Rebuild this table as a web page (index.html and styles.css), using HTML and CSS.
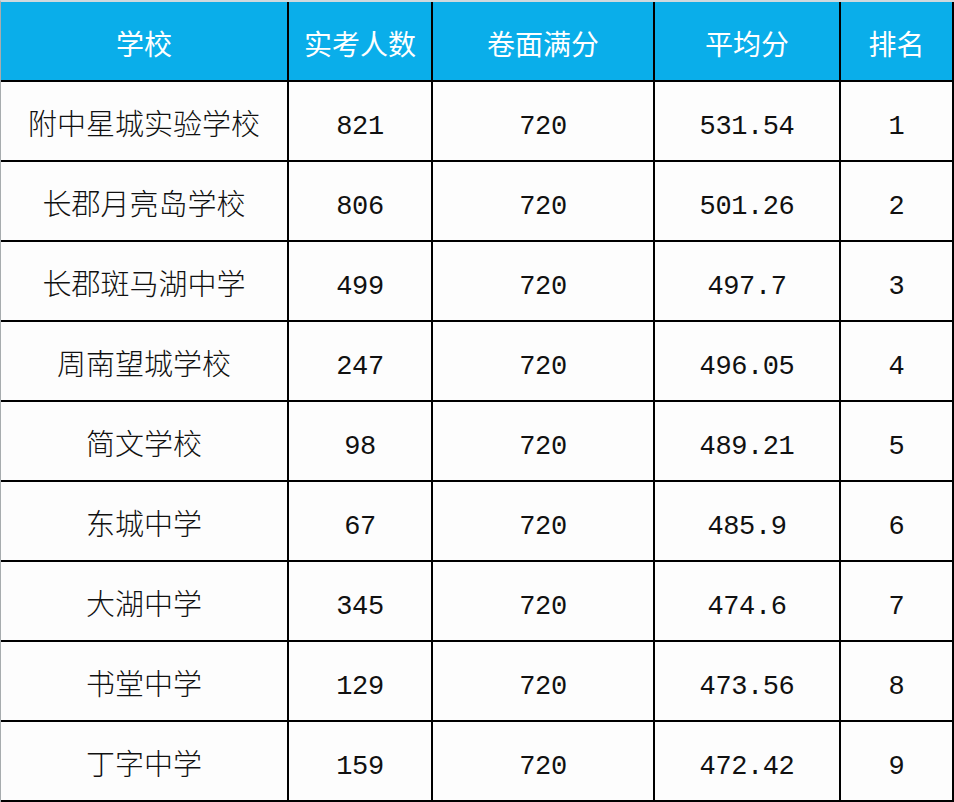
FILE: index.html
```html
<!DOCTYPE html>
<html lang="zh">
<head>
<meta charset="utf-8">
<title>成绩表</title>
<link rel="stylesheet" href="styles.css">
</head>
<body>
<div class="table">
  <div class="cell head">学校</div>
  <div class="cell head">实考人数</div>
  <div class="cell head">卷面满分</div>
  <div class="cell head">平均分</div>
  <div class="cell head">排名</div>

  <div class="cell name">附中星城实验学校</div>
  <div class="cell num">821</div>
  <div class="cell num">720</div>
  <div class="cell num">531.54</div>
  <div class="cell num">1</div>

  <div class="cell name">长郡月亮岛学校</div>
  <div class="cell num">806</div>
  <div class="cell num">720</div>
  <div class="cell num">501.26</div>
  <div class="cell num">2</div>

  <div class="cell name">长郡斑马湖中学</div>
  <div class="cell num">499</div>
  <div class="cell num">720</div>
  <div class="cell num">497.7</div>
  <div class="cell num">3</div>

  <div class="cell name">周南望城学校</div>
  <div class="cell num">247</div>
  <div class="cell num">720</div>
  <div class="cell num">496.05</div>
  <div class="cell num">4</div>

  <div class="cell name">简文学校</div>
  <div class="cell num">98</div>
  <div class="cell num">720</div>
  <div class="cell num">489.21</div>
  <div class="cell num">5</div>

  <div class="cell name">东城中学</div>
  <div class="cell num">67</div>
  <div class="cell num">720</div>
  <div class="cell num">485.9</div>
  <div class="cell num">6</div>

  <div class="cell name">大湖中学</div>
  <div class="cell num">345</div>
  <div class="cell num">720</div>
  <div class="cell num">474.6</div>
  <div class="cell num">7</div>

  <div class="cell name">书堂中学</div>
  <div class="cell num">129</div>
  <div class="cell num">720</div>
  <div class="cell num">473.56</div>
  <div class="cell num">8</div>

  <div class="cell name">丁字中学</div>
  <div class="cell num">159</div>
  <div class="cell num">720</div>
  <div class="cell num">472.42</div>
  <div class="cell num">9</div>
</div>
</body>
</html>
```
FILE: styles.css
```css
html, body {
  margin: 0;
  padding: 0;
  background: #ffffff;
}
.table {
  width: 954px;
  height: 802px;
  box-sizing: border-box;
  display: grid;
  grid-template-columns: 286px 142px 220px 184px 111px;
  grid-template-rows: repeat(10, 78px);
  gap: 2px;
  padding: 0 2px 2px 0;
  background: #000000;
  border-left: 1px solid #a7acae;
  border-top: 2px solid #cfd9de;
}
.cell {
  display: flex;
  align-items: center;
  justify-content: center;
  background: #fdfdfd;
  color: #111111;
  box-sizing: border-box;
}
.head {
  background: #0aaeea;
  color: #ffffff;
  font-family: "Noto Sans CJK SC", "Noto Sans", sans-serif;
  font-size: 28px;
  padding-top: 4px;
}
.name {
  font-family: "Noto Sans CJK SC", "Noto Sans", sans-serif;
  font-size: 29px;
  font-weight: 300;
  padding-top: 2px;
}
.num {
  font-family: "Liberation Mono", "DejaVu Sans Mono", monospace;
  font-size: 27px;
  letter-spacing: -0.4px;
  padding-top: 12px;
}
```
